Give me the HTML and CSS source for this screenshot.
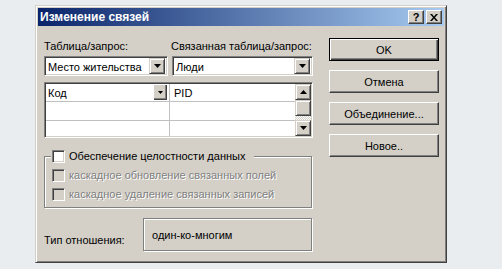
FILE: index.html
```html
<!DOCTYPE html>
<html lang="ru">
<head>
    <meta charset="UTF-8">
    <title>Изменение связей</title>
    <link rel="stylesheet" href="styles.css">
</head>
<body>
    <div class="window">
        <div class="titlebar">
            <span class="title">Изменение связей</span>
            <div class="caption-buttons">
                <span class="cap-btn help">?</span>
                <span class="cap-btn close">
                    <svg width="8" height="7" viewBox="0 0 8 7"><path d="M0 0h2l2 2.5L6 0h2L5 3.5 8 7H6L4 4.5 2 7H0l3-3.5z" fill="#000"/></svg>
                </span>
            </div>
        </div>

        <div class="client">
            <div class="main">
                <div class="labels">
                    <span class="lbl-left">Таблица/запрос:</span>
                    <span>Связанная таблица/запрос:</span>
                </div>

                <div class="combos">
                    <div class="combo combo-left">
                        <span class="combo-text">Место жительства</span>
                        <span class="drop-btn"><svg width="7" height="4" viewBox="0 0 7 4"><path d="M0 0h7L3.5 4z" fill="#000"/></svg></span>
                    </div>
                    <div class="combo combo-right">
                        <span class="combo-text">Люди</span>
                        <span class="drop-btn"><svg width="7" height="4" viewBox="0 0 7 4"><path d="M0 0h7L3.5 4z" fill="#000"/></svg></span>
                    </div>
                </div>

                <div class="grid">
                    <div class="grid-body">
                        <div class="row head">
                            <div class="cell c1">Код<span class="cell-drop"><svg width="5" height="3" viewBox="0 0 5 3"><path d="M0 0h5L2.5 3z" fill="#000"/></svg></span></div>
                            <div class="cell c2">PID</div>
                        </div>
                        <div class="row">
                            <div class="cell c1"></div>
                            <div class="cell c2"></div>
                        </div>
                        <div class="row last">
                            <div class="cell c1"></div>
                            <div class="cell c2"></div>
                        </div>
                    </div>
                    <div class="scrollbar">
                        <span class="sb-btn"><svg width="7" height="4" viewBox="0 0 7 4"><path d="M0 4h7L3.5 0z" fill="#000"/></svg></span>
                        <span class="sb-thumb"></span>
                        <span class="sb-track"></span>
                        <span class="sb-btn"><svg width="7" height="4" viewBox="0 0 7 4"><path d="M0 0h7L3.5 4z" fill="#000"/></svg></span>
                    </div>
                </div>

                <fieldset class="integrity">
                    <legend><span class="check"></span>Обеспечение целостности данных</legend>
                    <div class="opt disabled"><span class="check"></span>каскадное обновление связанных полей</div>
                    <div class="opt disabled second"><span class="check"></span>каскадное удаление связанных записей</div>
                </fieldset>

                <div class="relation">
                    <span class="rel-label">Тип отношения:</span>
                    <div class="rel-box">один-ко-многим</div>
                </div>
            </div>

            <div class="actions">
                <button class="btn default">OK</button>
                <button class="btn">Отмена</button>
                <button class="btn">Объединение...</button>
                <button class="btn">Новое..</button>
            </div>
        </div>
    </div>
</body>
</html>
```

FILE: styles.css
```css
* {
    margin: 0;
    padding: 0;
    box-sizing: border-box;
}
body {
    background-color: #e9edf0;
    font-family: "Liberation Sans", Arial, sans-serif;
    font-size: 11px;
    color: #000;
    white-space: nowrap;
}
.window {
    margin: 5px 0 0 35px;
    width: 412px;
    height: 258px;
    background-color: #d4d0c8;
    border: 1px solid;
    border-color: #d4d0c8 #404040 #404040 #d4d0c8;
    box-shadow: inset 1px 1px #fff, inset -1px -1px #808080;
    padding: 2px;
}
.titlebar {
    height: 18px;
    display: flex;
    align-items: center;
    justify-content: space-between;
    padding: 0 2px;
    background: linear-gradient(to right, #0a246a, #a6caf0);
}
.title {
    color: #fff;
    font-weight: bold;
    font-size: 12px;
}
.caption-buttons {
    display: flex;
    gap: 2px;
}
.cap-btn {
    width: 16px;
    height: 14px;
    display: flex;
    align-items: center;
    justify-content: center;
    background-color: #d4d0c8;
    border: 1px solid;
    border-color: #fff #404040 #404040 #fff;
    box-shadow: inset -1px -1px #808080;
    font-weight: bold;
    font-size: 11px;
    line-height: 12px;
}
.client {
    display: flex;
    gap: 16px;
    padding: 0 5px 0 6px;
}
.main {
    width: 269px;
}
.labels {
    display: flex;
    line-height: 14px;
    padding-top: 13px;
}
.lbl-left {
    width: 127px;
}
.combos {
    display: flex;
    gap: 4px;
    margin-top: 3px;
}
.combo {
    height: 20px;
    display: flex;
    align-items: center;
    background-color: #fff;
    border: 1px solid;
    border-color: #808080 #fff #fff #808080;
    box-shadow: inset 1px 1px #404040, inset -1px -1px #d4d0c8;
    padding: 2px 2px 2px 3px;
}
.combo-left {
    width: 124px;
}
.combo-right {
    flex: 1;
}
.combo-text {
    flex: 1;
    padding-top: 1px;
}
.drop-btn,
.sb-btn {
    width: 16px;
    height: 16px;
    display: flex;
    align-items: center;
    justify-content: center;
    background-color: #d4d0c8;
    border: 1px solid;
    border-color: #d4d0c8 #404040 #404040 #d4d0c8;
    box-shadow: inset 1px 1px #fff, inset -1px -1px #808080;
}
.grid {
    display: flex;
    height: 56px;
    margin-top: 6px;
    background-color: #fff;
    border: 1px solid;
    border-color: #808080 #fff #fff #808080;
    box-shadow: inset 1px 1px #404040, inset -1px -1px #d4d0c8;
    padding: 1px;
}
.grid-body {
    flex: 1;
    display: flex;
    flex-direction: column;
}
.row {
    display: flex;
    height: 18px;
    border-bottom: 1px solid #c0c0c0;
}
.row.head + .row {
    height: 19px;
}
.row.last {
    flex: 1;
    border-bottom: none;
}
.cell {
    display: flex;
    align-items: center;
    padding-left: 2px;
}
.c1 {
    width: 124px;
    border-right: 1px solid #c0c0c0;
    justify-content: space-between;
    padding-right: 2px;
}
.c2 {
    flex: 1;
    padding-left: 4px;
}
.cell-drop {
    width: 13px;
    height: 15px;
    display: flex;
    align-items: center;
    justify-content: center;
    background-color: #d4d0c8;
    border-right: 1px solid #404040;
    border-bottom: 1px solid #404040;
    box-shadow: inset -1px -1px #808080;
}
.scrollbar {
    width: 16px;
    display: flex;
    flex-direction: column;
}
.sb-thumb {
    height: 16px;
    background-color: #d4d0c8;
    border: 1px solid;
    border-color: #d4d0c8 #404040 #404040 #d4d0c8;
    box-shadow: inset 1px 1px #fff, inset -1px -1px #808080;
}
.sb-track {
    flex: 1;
    background-color: #fff;
    background-image: repeating-conic-gradient(#d4d0c8 0 25%, #fff 0 50%);
    background-size: 2px 2px;
}
.integrity {
    width: 268px;
    margin-top: 11px;
    border: 1px solid #808080;
    box-shadow: inset 1px 1px #fff, 1px 1px #fff;
    padding: 5px 0 6px 7px;
}
.integrity legend {
    display: flex;
    align-items: center;
    line-height: 14px;
    margin-left: -1px;
    padding: 0 9px 0 1px;
    background-color: #d4d0c8;
}
.check {
    width: 13px;
    height: 13px;
    margin-right: 4px;
    background-color: #fff;
    border: 1px solid;
    border-color: #808080 #fff #fff #808080;
    box-shadow: inset 1px 1px #404040, inset -1px -1px #d4d0c8;
}
.opt {
    display: flex;
    align-items: center;
    line-height: 14px;
}
.opt.second {
    margin-top: 5px;
}
.disabled {
    color: #808080;
    text-shadow: 1px 1px #fff;
}
.disabled .check {
    background-color: #d4d0c8;
}
.relation {
    display: flex;
    margin-top: 10px;
}
.rel-label {
    width: 99px;
    padding-top: 15px;
    line-height: 14px;
}
.rel-box {
    width: 169px;
    height: 33px;
    border: 1px solid #808080;
    box-shadow: inset 1px 1px #fff, 1px 1px #fff;
    padding: 9px 0 0 8px;
    line-height: 14px;
}
.actions {
    width: 110px;
    display: flex;
    flex-direction: column;
    gap: 9px;
    padding-top: 12px;
}
.btn {
    height: 23px;
    font-family: "Liberation Sans", Arial, sans-serif;
    font-size: 11px;
    color: #000;
    background-color: #d4d0c8;
    border: 1px solid;
    border-color: #fff #404040 #404040 #fff;
    box-shadow: inset -1px -1px #808080;
}
.btn.default {
    border: 1px solid #000;
    box-shadow: inset 1px 1px #fff, inset -1px -1px #404040, inset -2px -2px #808080;
}
```
